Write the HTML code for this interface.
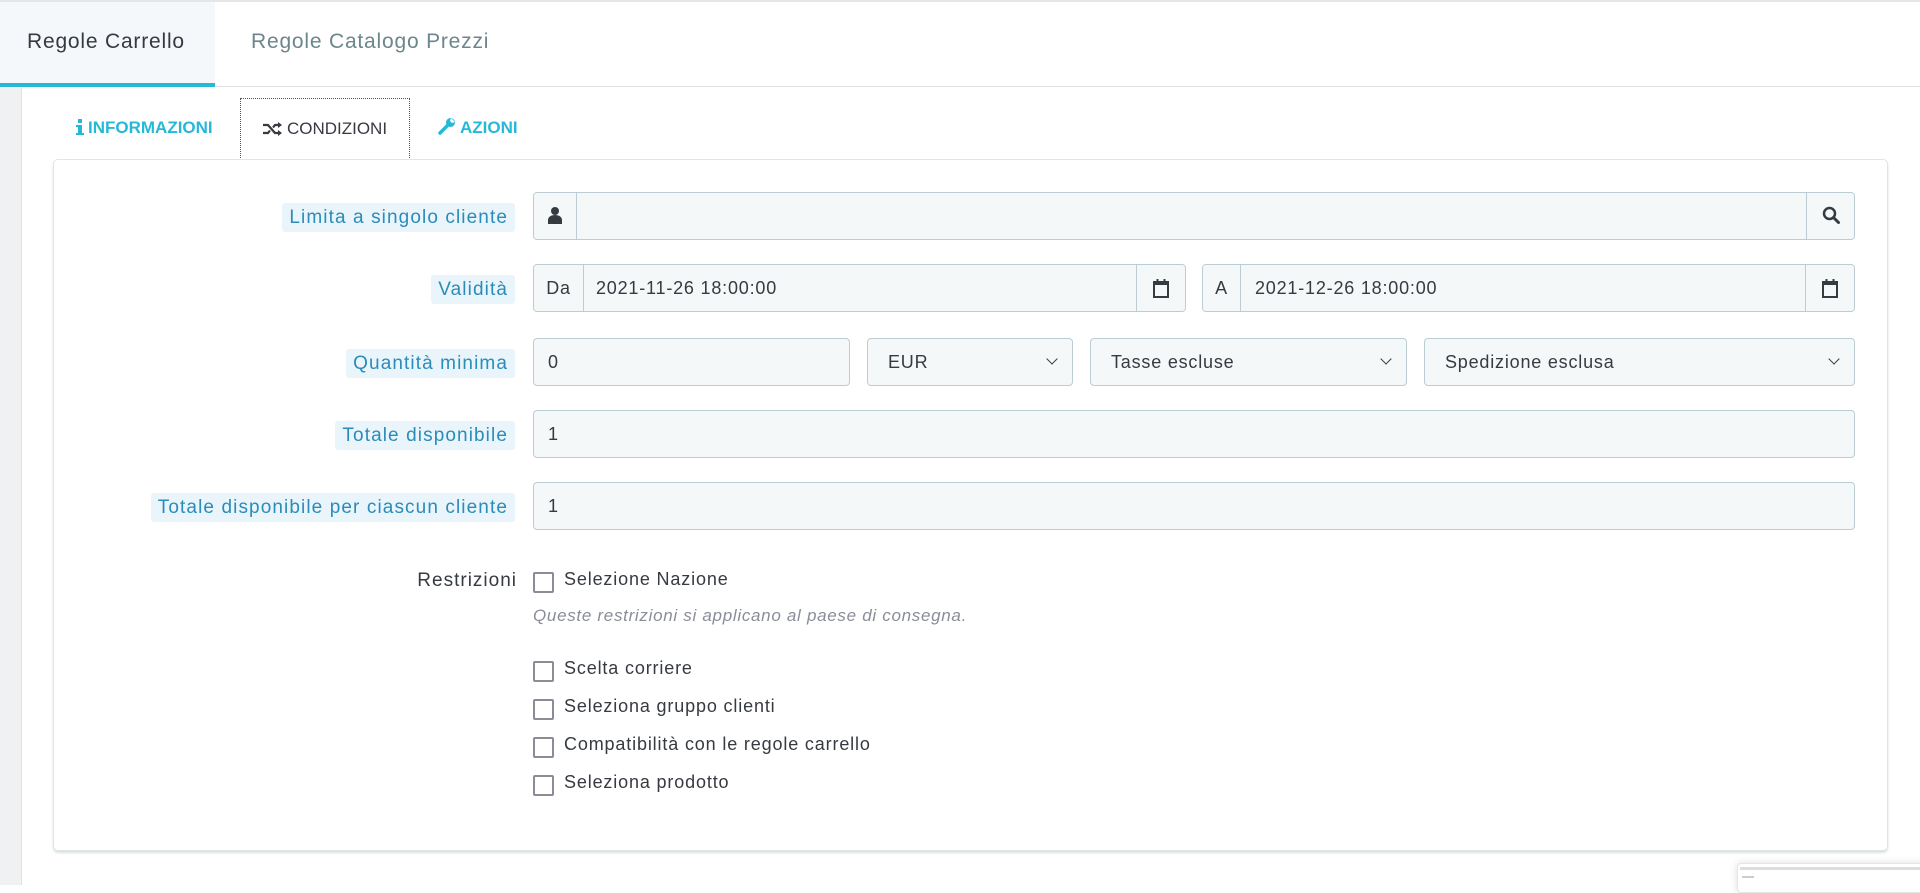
<!DOCTYPE html>
<html><head><meta charset="utf-8"><style>
*{box-sizing:border-box;margin:0;padding:0}
body{width:1920px;height:885px;overflow:hidden;background:#fff;font-family:"Liberation Sans",sans-serif;color:#363a41;position:relative}
.topline{position:absolute;left:0;top:0;width:1920px;height:2px;background:#e4e6e8}
.tabbar{position:absolute;left:0;top:2px;width:1920px;height:85px;border-bottom:1px solid #dfe3e6;background:#fff}
.t1{position:absolute;left:0;top:0;width:215px;height:85px;background:#f4f8fb;border-bottom:4px solid #25b9d7;font-size:21px;letter-spacing:0.8px;line-height:80px;padding-left:27px;color:#363a41}
.t2{position:absolute;left:251px;top:0;font-size:21px;letter-spacing:0.8px;line-height:80px;color:#6c868e}
.strip{position:absolute;left:0;top:88px;width:22px;height:797px;background:#eff1f2;border-right:1px solid #dfe3e6}
.st{position:absolute;top:98px;height:60px;font-size:17px;line-height:60px;color:#25b9d7;font-family:"Liberation Sans Narrow","Liberation Sans",sans-serif;font-weight:bold}
.st svg{vertical-align:-2px;margin-right:4px}
.cond{left:240px;width:170px;border:1px dotted #555;border-bottom:none;background:#fff;color:#363a41;text-align:center;font-weight:normal;z-index:2}
.panel{position:absolute;left:53px;top:159px;width:1835px;height:692px;border:1px solid #dbe6e9;border-radius:5px;box-shadow:0 2px 2px #e0e0e0}
.row{position:absolute;left:0;width:1920px;height:48px}
.lab{position:absolute;right:1405px;top:11px;height:29px;line-height:29px;padding:0 7px;background:#eaf4fb;color:#2a8cb8;font-size:19px;letter-spacing:1.1px;border-radius:3px}
.box{position:absolute;top:0;height:48px;border:1px solid #bbcdd2;border-radius:4px;background:#f5f8f9;font-size:18px;letter-spacing:0.8px;line-height:46px;color:#363a41;overflow:hidden}
.ad{position:absolute;top:0;height:46px;text-align:center;background:#f5f8f9}
.ad.l{left:0;border-right:1px solid #bbcdd2}
.ad.r{right:0;border-left:1px solid #bbcdd2}
.ad svg{margin-top:13px}
.sel::after{content:"";position:absolute;right:16px;top:16px;width:7px;height:7px;border-right:1.5px solid #363a41;border-bottom:1.5px solid #363a41;transform:rotate(45deg)}
.cb{position:absolute;left:533px;width:21px;height:21px;border:2px solid #8a8d98;border-radius:2px}
.ct{position:absolute;left:564px;font-size:18px;letter-spacing:0.85px;color:#363a41}
</style></head><body>
<div class="topline"></div>
<div class="tabbar"><div class="t1">Regole Carrello</div><div class="t2">Regole Catalogo Prezzi</div></div>
<div class="strip"></div>
<div class="st" style="left:76px"><svg width="8" height="16" viewBox="0 0 8 16"><rect x="2" y="0" width="4" height="4" fill="#25b9d7"/><path d="M0 6h6v8h2v2H0v-2h2V8H0z" fill="#25b9d7"/></svg>INFORMAZIONI</div>
<div class="st cond"><svg width="20" height="14" viewBox="0 0 20 14"><path d="M0 3h5l7 8h4M0 11h5l2-2.5M10 5.5L12 3h4" stroke="#363a41" stroke-width="2.2" fill="none"/><path d="M15 0l4 3-4 3zM15 8l4 3-4 3z" fill="#363a41"/></svg>CONDIZIONI</div>
<div class="st" style="left:438px"><svg width="18" height="18" viewBox="0 0 18 18"><path d="M2 16l8-8" stroke="#25b9d7" stroke-width="3.5" stroke-linecap="round"/><circle cx="12.5" cy="5.5" r="4.5" fill="#25b9d7"/><path d="M13 1l4 4-3 1-2-2z" fill="#fff"/></svg>AZIONI</div>
<div class="panel"></div>

<div class="row" style="top:192px"><div class="lab">Limita a singolo cliente</div>
<div class="box" style="left:533px;width:1322px"><div class="ad l" style="width:43px"><svg width="14" height="18" viewBox="0 0 14 18"><circle cx="7" cy="5" r="4" fill="#363a41"/><path d="M0 18v-4c0-3 3-5 7-5s7 2 7 5v4z" fill="#363a41"/></svg></div>
<div class="ad r" style="width:48px"><svg width="18" height="18" viewBox="0 0 18 18"><circle cx="7.5" cy="7.5" r="5.5" stroke="#363a41" stroke-width="2.5" fill="none"/><path d="M11.5 11.5l5 5" stroke="#363a41" stroke-width="3" stroke-linecap="round"/></svg></div></div></div>

<div class="row" style="top:264px"><div class="lab">Validità</div>
<div class="box" style="left:533px;width:653px"><div class="ad l" style="width:50px">Da</div><span style="position:absolute;left:62px">2021-11-26 18:00:00</span>
<div class="ad r" style="width:49px"><svg width="16" height="20" viewBox="0 0 16 20"><rect x="1" y="4" width="14" height="15" stroke="#363a41" stroke-width="2" fill="none"/><rect x="1" y="4" width="14" height="3" fill="#363a41"/><path d="M4.5 1v5M11.5 1v5" stroke="#363a41" stroke-width="2"/></svg></div></div>
<div class="box" style="left:1202px;width:653px"><div class="ad l" style="width:38px">A</div><span style="position:absolute;left:52px">2021-12-26 18:00:00</span>
<div class="ad r" style="width:49px"><svg width="16" height="20" viewBox="0 0 16 20"><rect x="1" y="4" width="14" height="15" stroke="#363a41" stroke-width="2" fill="none"/><rect x="1" y="4" width="14" height="3" fill="#363a41"/><path d="M4.5 1v5M11.5 1v5" stroke="#363a41" stroke-width="2"/></svg></div></div></div>

<div class="row" style="top:338px"><div class="lab">Quantità minima</div>
<div class="box" style="left:533px;width:317px;padding-left:14px">0</div>
<div class="box sel" style="left:867px;width:206px;padding-left:20px">EUR</div>
<div class="box sel" style="left:1090px;width:317px;padding-left:20px">Tasse escluse</div>
<div class="box sel" style="left:1424px;width:431px;padding-left:20px">Spedizione esclusa</div></div>

<div class="row" style="top:410px"><div class="lab">Totale disponibile</div>
<div class="box" style="left:533px;width:1322px;padding-left:14px">1</div></div>

<div class="row" style="top:482px"><div class="lab">Totale disponibile per ciascun cliente</div>
<div class="box" style="left:533px;width:1322px;padding-left:14px">1</div></div>

<div style="position:absolute;right:1403px;top:570px;font-size:19px;letter-spacing:1px;color:#363a41">Restrizioni</div>
<div class="cb" style="top:572px"></div><div class="ct" style="top:569px">Selezione Nazione</div>
<div style="position:absolute;left:533px;top:606px;font-size:17px;letter-spacing:0.7px;font-style:italic;color:#8a8d98">Queste restrizioni si applicano al paese di consegna.</div>
<div class="cb" style="top:661px"></div><div class="ct" style="top:658px">Scelta corriere</div>
<div class="cb" style="top:699px"></div><div class="ct" style="top:696px">Seleziona gruppo clienti</div>
<div class="cb" style="top:737px"></div><div class="ct" style="top:734px">Compatibilità con le regole carrello</div>
<div class="cb" style="top:775px"></div><div class="ct" style="top:772px">Seleziona prodotto</div>

<div style="position:absolute;left:1737px;top:863px;width:190px;height:30px;background:#fff;border:1px solid #e6e6e6;border-radius:4px;box-shadow:0 0 8px #ddd"><div style="margin:3px 2px;height:3px;background:#ddd"></div><div style="margin:6px 4px;width:12px;height:2px;background:#ccc"></div></div>
</body></html>
